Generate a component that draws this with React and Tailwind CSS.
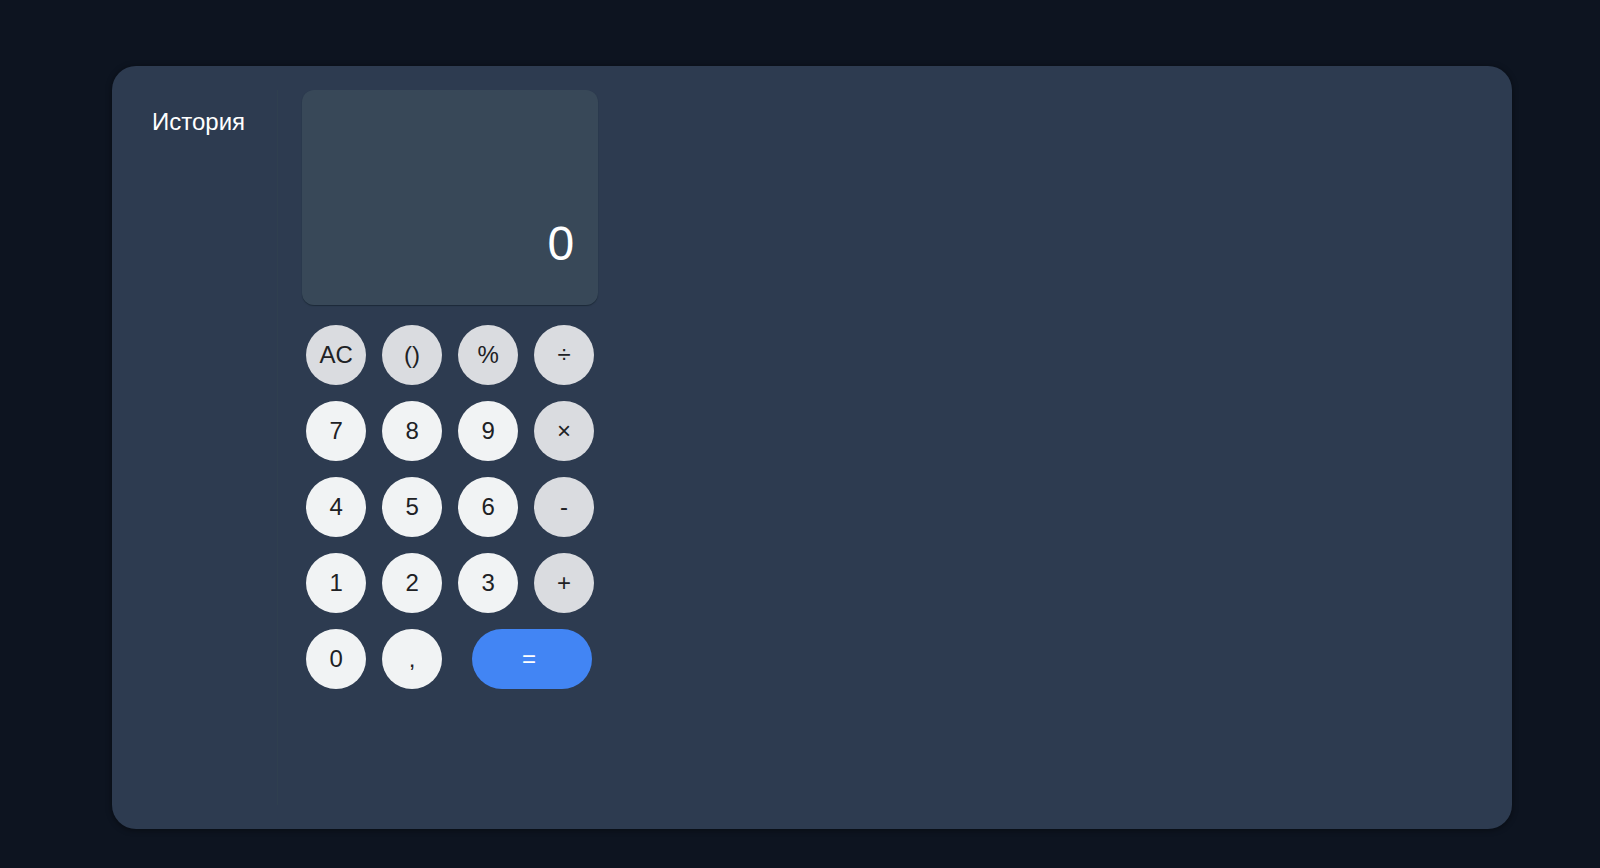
const keys = [
  { label: "AC", name: "Сброс", tone: "op" },
  { label: "()", name: "Скобки", tone: "op" },
  { label: "%", name: "Процент", tone: "op" },
  { label: "÷", name: "Разделить", tone: "op" },
  { label: "7" },
  { label: "8" },
  { label: "9" },
  { label: "×", name: "Умножить", tone: "op" },
  { label: "4" },
  { label: "5" },
  { label: "6" },
  { label: "-", name: "Минус", tone: "op" },
  { label: "1" },
  { label: "2" },
  { label: "3" },
  { label: "+", name: "Плюс", tone: "op" },
  { label: "0" },
  { label: ",", name: "Запятая" },
];

function Key({ label, name, tone }) {
  const color = tone === "op" ? "bg-[#dadce0]" : "bg-[#f1f3f4]";
  return (
    <button
      type="button"
      aria-label={name}
      className={`flex size-15 items-center justify-center rounded-full text-2xl text-[#202124] ${color}`}
    >
      {label}
    </button>
  );
}

function History() {
  return (
    <aside className="border-r border-[#2f3f4f] pt-4 pr-8 pl-4">
      <h2 className="text-2xl text-white">История</h2>
    </aside>
  );
}

function Calculator() {
  return (
    <section className="w-74">
      <output className="flex h-[215px] items-end justify-end rounded-xl bg-[#384858] px-6 pb-[37px] text-5xl text-white shadow-[0_1px_1px_#1c2a38]">
        0
      </output>
      <div className="mt-5 grid grid-cols-4 gap-4 px-1">
        {keys.map((key) => (
          <Key key={key.label} {...key} />
        ))}
        <button
          type="button"
          aria-label="Равно"
          className="col-span-2 mr-0.5 flex h-15 w-30 items-center justify-center justify-self-end rounded-full bg-[#4285f4] pr-1.5 text-2xl text-white"
        >
          =
        </button>
      </div>
    </section>
  );
}

export default function App() {
  return (
    <div className="flex min-h-screen bg-[#0d1420] pt-[66px] pr-22 pb-[39px] pl-28 font-['Liberation_Sans',Arial,sans-serif]">
      <main className="flex flex-1 gap-6 rounded-3xl bg-[#2d3b50] p-6 shadow-[0_1px_6px_rgba(0,0,0,0.45)]">
        <History />
        <Calculator />
      </main>
    </div>
  );
}
